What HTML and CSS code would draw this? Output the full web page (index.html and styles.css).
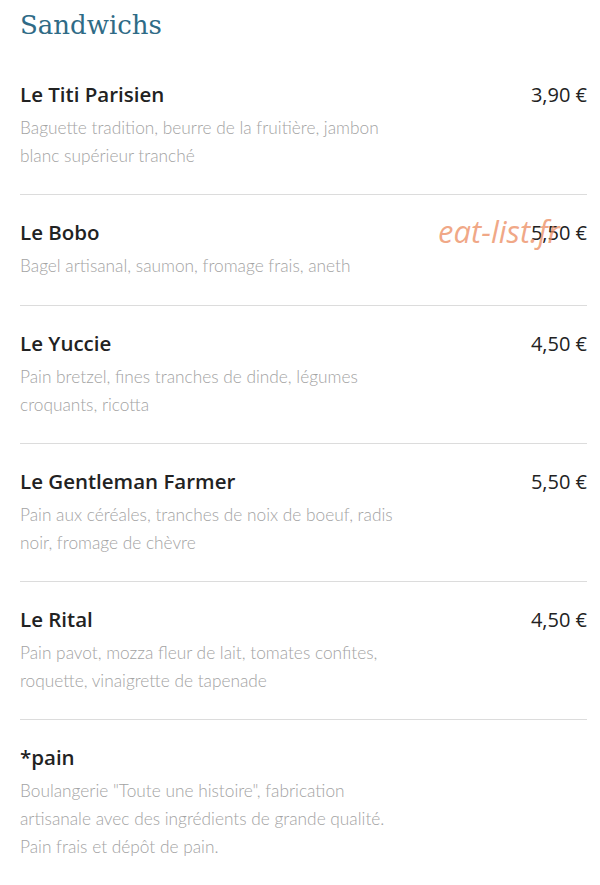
FILE: index.html
```html
<!DOCTYPE html>
<html lang="fr">
<head>
<meta charset="utf-8">
<link rel="stylesheet" href="styles.css">
</head>
<body>
<main class="menu">
  <h1 class="title">Sandwichs</h1>
  <div class="item">
    <div class="row"><span class="name">Le Titi Parisien</span><span class="price">3,90 €</span></div>
    <p class="desc">Baguette tradition, beurre de la fruitière, jambon blanc supérieur tranché</p>
  </div>
  <div class="item single">
    <div class="row"><span class="name">Le Bobo</span><span class="price">5,50 €</span></div>
    <p class="desc">Bagel artisanal, saumon, fromage frais, aneth</p>
    <span class="watermark">eat-list.fr</span>
  </div>
  <div class="item">
    <div class="row"><span class="name">Le Yuccie</span><span class="price">4,50 €</span></div>
    <p class="desc">Pain bretzel, fines tranches de dinde, légumes croquants, ricotta</p>
  </div>
  <div class="item">
    <div class="row"><span class="name">Le Gentleman Farmer</span><span class="price">5,50 €</span></div>
    <p class="desc">Pain aux céréales, tranches de noix de boeuf, radis noir, fromage de chèvre</p>
  </div>
  <div class="item">
    <div class="row"><span class="name">Le Rital</span><span class="price">4,50 €</span></div>
    <p class="desc">Pain pavot, mozza fleur de lait, tomates confites, roquette, vinaigrette de tapenade</p>
  </div>
  <div class="item last">
    <div class="row"><span class="name">*pain</span></div>
    <p class="desc">Boulangerie "Toute une histoire", fabrication artisanale avec des ingrédients de grande qualité. Pain frais et dépôt de pain.</p>
  </div>
</main>
</body>
</html>
```
FILE: styles.css
```css
html, body {
  margin: 0;
  padding: 0;
  background: #ffffff;
}
.menu {
  padding: 0 13px 0 20px;
  font-family: "Open Sans", sans-serif;
}
.title {
  margin: 0;
  padding-top: 6px;
  height: 51px;
  font-family: "DejaVu Serif", serif;
  font-weight: 400;
  font-size: 26px;
  line-height: 38px;
  color: #2f6b86;
}
.item {
  position: relative;
  padding: 23px 0 24px;
  border-bottom: 1px solid #dcdcdc;
}
.item.single {
  padding-bottom: 25px;
}
.item.last {
  border-bottom: none;
}
.row {
  display: flex;
  justify-content: space-between;
  align-items: center;
  height: 28px;
}
.name {
  font-size: 20.5px;
  font-weight: 600;
  color: #222222;
}
.price {
  font-size: 20px;
  font-weight: 400;
  color: #222222;
}
.desc {
  margin: 6px 0 0;
  max-width: 392px;
  font-family: "Lato", sans-serif;
  font-size: 17.3px;
  line-height: 28px;
  font-weight: 300;
  color: #a3a3a3;
}
.watermark {
  position: absolute;
  left: 418px;
  top: 15px;
  font-family: "Open Sans", sans-serif;
  font-style: italic;
  font-size: 31px;
  color: rgba(236, 140, 95, 0.75);
}
```
